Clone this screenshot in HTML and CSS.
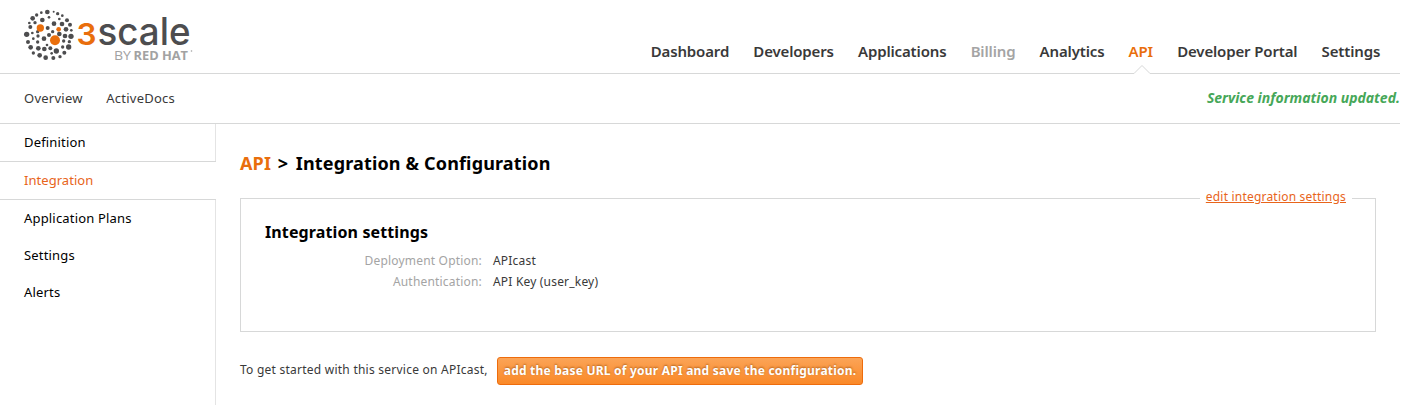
FILE: index.html
```html
<!DOCTYPE html>
<html lang="en">
<head>
<meta charset="utf-8">
<title>3scale - Integration &amp; Configuration</title>
<link rel="stylesheet" href="styles.css">
</head>
<body>
<header class="header">
  <a class="logo" aria-label="3scale by Red Hat">
    <svg width="190" height="70" viewBox="0 0 190 70">
      <g transform="translate(20 5) scale(.33333)">
        <g fill="#4d4d4f">
          <circle cx="82" cy="21" r="7"/><circle cx="64" cy="23" r="4"/><circle cx="101" cy="20" r="3"/>
          <circle cx="50" cy="30" r="5"/><circle cx="113" cy="26" r="5"/><circle cx="87" cy="37" r="4"/>
          <circle cx="38" cy="40" r="7"/><circle cx="127" cy="32" r="4"/><circle cx="118" cy="42" r="4"/>
          <circle cx="67" cy="45" r="7"/><circle cx="102" cy="56" r="7"/><circle cx="45" cy="53" r="5"/>
          <circle cx="141" cy="46" r="6"/><circle cx="28" cy="54" r="4"/><circle cx="126" cy="57" r="7"/>
          <circle cx="150" cy="59" r="6"/><circle cx="31" cy="66" r="6"/><circle cx="83" cy="69" r="6"/>
          <circle cx="138" cy="73" r="7"/><circle cx="154" cy="76" r="4"/><circle cx="20" cy="88" r="8"/>
          <circle cx="37" cy="84" r="4"/><circle cx="53" cy="80" r="5"/><circle cx="98" cy="80" r="5"/>
          <circle cx="118" cy="87" r="7"/><circle cx="153" cy="94" r="8"/><circle cx="54" cy="93" r="5"/>
          <circle cx="87" cy="90" r="6"/><circle cx="40" cy="101" r="4"/><circle cx="72" cy="101" r="7"/>
          <circle cx="24" cy="111" r="6"/><circle cx="53" cy="111" r="5"/><circle cx="135" cy="93" r="7"/>
          <circle cx="131" cy="108" r="5"/><circle cx="148" cy="110" r="5"/><circle cx="81" cy="120" r="4"/>
          <circle cx="32" cy="127" r="7"/><circle cx="55" cy="130" r="7"/><circle cx="73" cy="132" r="7"/>
          <circle cx="91" cy="130" r="6"/><circle cx="109" cy="138" r="8"/><circle cx="128" cy="126" r="5"/>
          <circle cx="146" cy="126" r="8"/><circle cx="40" cy="144" r="5"/><circle cx="59" cy="151" r="7"/>
          <circle cx="133" cy="143" r="6"/><circle cx="95" cy="145" r="4"/><circle cx="77" cy="158" r="7"/>
          <circle cx="100" cy="159" r="6"/><circle cx="120" cy="155" r="5"/>
        </g>
        <g fill="#e96e0c"><circle cx="61" cy="69" r="11"/><circle cx="116" cy="73" r="7"/><circle cx="105" cy="106" r="15"/></g>
      </g>
      <text class="logo-digit" x="76.500" y="45" textLength="20" lengthAdjust="spacingAndGlyphs">3</text>
      <text class="logo-name" x="97.500" y="45" textLength="93" lengthAdjust="spacingAndGlyphs">scale</text>
      <text class="logo-by" x="114" y="59.500" textLength="17" lengthAdjust="spacingAndGlyphs">BY</text>
      <text class="logo-by logo-bold" x="133.500" y="59.500" textLength="54.500" lengthAdjust="spacingAndGlyphs">RED HAT</text>
      <circle cx="191.500" cy="51" r=".8" fill="#a2a2a2"/>
    </svg>
  </a>
  <nav class="nav">
    <a>Dashboard</a><a>Developers</a><a>Applications</a><a class="muted">Billing</a><a>Analytics</a><a class="current">API<svg class="notch" width="20" height="11" viewBox="0 0 20 11"><path d="M0 9.500H2L10 1.500L18 9.500H20V11H0Z" fill="#fff"/><path d="M0 9.500H2L10 1.500L18 9.500H20" fill="none" stroke="#d7d8d8"/></svg></a><a>Developer Portal</a><a>Settings</a>
  </nav>
</header>
<div class="subbar">
  <nav class="subnav"><a>Overview</a><a>ActiveDocs</a></nav>
  <p class="flash">Service information updated.</p>
</div>
<div class="body">
  <aside class="side">
    <a>Definition</a>
    <a class="active">Integration</a>
    <a>Application Plans</a>
    <a>Settings</a>
    <a>Alerts</a>
  </aside>
  <main class="main">
    <h1><span class="orange">API</span> <span class="sep">&gt;</span> Integration &amp; Configuration</h1>
    <section class="box">
      <a class="edit">edit integration settings</a>
      <h2>Integration settings</h2>
      <dl><dt>Deployment Option:</dt><dd>APIcast</dd><dt>Authentication:</dt><dd>API Key (user_key)</dd></dl>
    </section>
    <div class="start"><span>To get started with this service on APIcast,</span><a class="button">add the base URL of your API and save the configuration.</a></div>
  </main>
</div>
</body>
</html>
```
FILE: styles.css
```css
* { box-sizing: border-box; }
body { margin: 0; width: 1415px; height: 405px; overflow: hidden; background: #fff; color: #393939; font: 13px/20px "Noto Sans", "Open Sans", sans-serif; }
h1, h2, p, dl, dd { margin: 0; }
a { white-space: nowrap; }
.header { display: flex; justify-content: space-between; width: 1400px; height: 74px; border-bottom: 1px solid #d7d8d8; }
.logo { display: block; height: 70px; }
.logo svg { display: block; overflow: visible; }
.logo-name { font: 450 38px Inter, sans-serif; fill: #4d4d4f; }
.logo-digit { font: 600 30px Inter, sans-serif; fill: #e96e0c; }
.logo-by { font: 400 12.5px "Open Sans", sans-serif; fill: #a2a2a2; }
.logo-bold { font-weight: 700; }
.nav { display: flex; gap: 24.2px; padding: 41px 19.8px 0 0; font-size: 15px; font-weight: 600; letter-spacing: -.15px; }
.nav a { position: relative; }
.nav .muted { color: #a4a4a4; }
.nav .current, .orange { color: #e96e0c; }
.notch { position: absolute; left: calc(50% - 9px); top: 23px; }
.subbar { display: flex; justify-content: space-between; align-items: center; width: 1400px; height: 50px; padding: 0 0 2px 24px; border-bottom: 1px solid #d7d8d8; }
.subnav { display: flex; gap: 23.500px; letter-spacing: .25px; }
.flash { color: #46a758; font-size: 14px; font-weight: 700; font-style: italic; }
.body { display: flex; height: 281px; }
.side { display: flex; flex-direction: column; flex: none; width: 216px; color: #000; letter-spacing: .18px; }
.side a { height: 37px; padding: 8px 0 0 24px; border-right: 1px solid #e4e4e4; }
.side::after { content: ""; flex: 1; border-right: 1px solid #e4e4e4; }
.side .active { height: 39px; border: solid #d7d8d8; border-width: 1px 0; color: #e8641b; letter-spacing: .05px; }
.main { width: 1160px; padding: 27px 0 0 24px; }
h1 { height: 47px; color: #000; font-size: 18px; line-height: 24px; font-weight: 700; letter-spacing: .15px; }
.sep { margin: 0 2.8px 0 1.8px; }
.box { position: relative; height: 134px; padding: 23px 24px; border: 1px solid #d7d8d8; }
.edit { position: absolute; right: 23px; top: -12px; padding: 0 6px; background: #fff; color: #e8641b; font-size: 12px; letter-spacing: .2px; text-decoration: underline; }
h2 { height: 29px; color: #000; font-size: 16px; line-height: 20px; font-weight: 700; letter-spacing: .12px; }
dl { display: grid; grid-template-columns: 217px 1fr; column-gap: 11px; grid-auto-rows: 21px; font-size: 12px; letter-spacing: .19px; }
dt { color: #a4a4a4; text-align: right; }
.start { display: flex; gap: 9px; margin-top: 25px; font-size: 12px; line-height: 26px; letter-spacing: .24px; }
.button { height: 28px; padding: 0 6px; border: 1px solid #ee6c0c; border-radius: 3px; background: linear-gradient(#fba457, #fa8928); color: #fff; font-weight: 700; letter-spacing: .22px; text-shadow: 0 -1px 2px rgba(150, 75, 10, .7); }
```
